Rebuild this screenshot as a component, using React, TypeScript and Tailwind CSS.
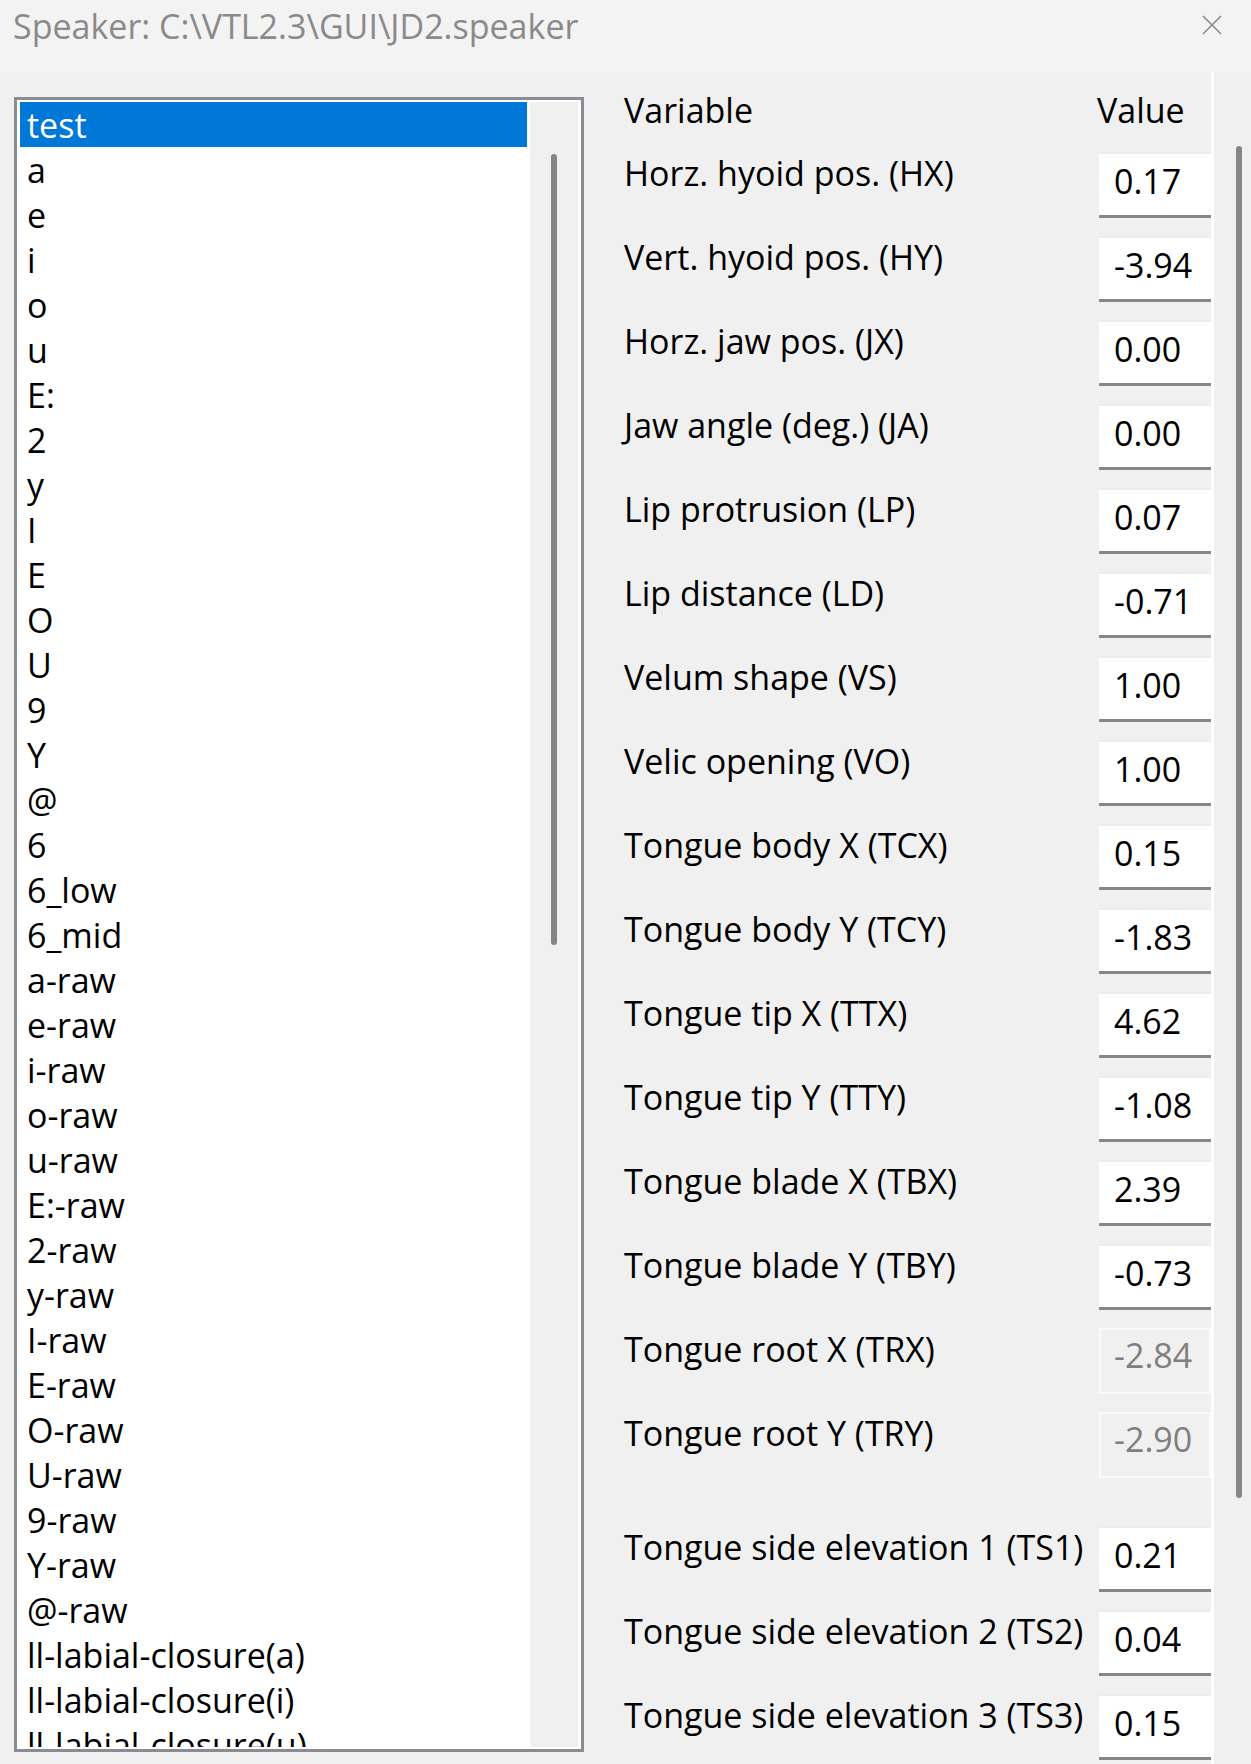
import React from 'react';

const phonemes = [
  'test', 'a', 'e', 'i', 'o', 'u', 'E:', '2', 'y', 'I', 'E', 'O', 'U', '9', 'Y', '@', '6',
  '6_low', '6_mid', 'a-raw', 'e-raw', 'i-raw', 'o-raw', 'u-raw', 'E:-raw', '2-raw', 'y-raw',
  'I-raw', 'E-raw', 'O-raw', 'U-raw', '9-raw', 'Y-raw', '@-raw', 'll-labial-closure(a)',
  'll-labial-closure(i)', 'll-labial-closure(u)',
];

type Param = { label: string; value: string; disabled?: boolean; gapBefore?: boolean };

const params: Param[] = [
  { label: 'Horz. hyoid pos. (HX)', value: '0.17' },
  { label: 'Vert. hyoid pos. (HY)', value: '-3.94' },
  { label: 'Horz. jaw pos. (JX)', value: '0.00' },
  { label: 'Jaw angle (deg.) (JA)', value: '0.00' },
  { label: 'Lip protrusion (LP)', value: '0.07' },
  { label: 'Lip distance (LD)', value: '-0.71' },
  { label: 'Velum shape (VS)', value: '1.00' },
  { label: 'Velic opening (VO)', value: '1.00' },
  { label: 'Tongue body X (TCX)', value: '0.15' },
  { label: 'Tongue body Y (TCY)', value: '-1.83' },
  { label: 'Tongue tip X (TTX)', value: '4.62' },
  { label: 'Tongue tip Y (TTY)', value: '-1.08' },
  { label: 'Tongue blade X (TBX)', value: '2.39' },
  { label: 'Tongue blade Y (TBY)', value: '-0.73' },
  { label: 'Tongue root X (TRX)', value: '-2.84', disabled: true },
  { label: 'Tongue root Y (TRY)', value: '-2.90', disabled: true },
  { label: 'Tongue side elevation 1 (TS1)', value: '0.21', gapBefore: true },
  { label: 'Tongue side elevation 2 (TS2)', value: '0.04' },
  { label: 'Tongue side elevation 3 (TS3)', value: '0.15' },
];

function ParamRow({ p }: { p: Param }) {
  return (
    <div className={`flex h-[84px] shrink-0 items-start ${p.gapBefore ? 'mt-[30px]' : ''}`}>
      <div className="mt-[1px] w-[475px] shrink-0 leading-[45px] text-black whitespace-nowrap">{p.label}</div>
      {p.disabled ? (
        <div className="mt-[2px] h-[66px] w-[112px] shrink-0 border-2 border-[#fbfbfb] bg-[#f0f0f0] pl-[13px] pt-[3px] leading-[45px] text-[#7f7f7f]">
          {p.value}
        </div>
      ) : (
        <div className="mt-[2px] h-[66px] w-[112px] shrink-0 border-t-2 border-b-[3px] border-t-[#ececec] border-b-[#868686] bg-white pl-[15px] pt-[5px] leading-[45px] text-black">
          {p.value}
        </div>
      )}
    </div>
  );
}

export default function App() {
  return (
    <div
      className="w-[1251px] h-[1764px] overflow-hidden bg-[#f0f0f0] text-[34px]"
      style={{ fontFamily: '"Open Sans", "Noto Sans", sans-serif' }}
    >
      {/* title bar */}
      <div className="flex h-[72px] items-start justify-between bg-[#f3f3f3] pl-[13px]">
        <div className="pt-[4px] text-[34px] leading-[45px] text-[#8a8a8a] whitespace-nowrap">
          Speaker: C:\VTL2.3\GUI\JD2.speaker
        </div>
        <svg className="mr-[29px] mt-[15px]" width="20" height="20" viewBox="0 0 20 20">
          <path d="M1 1 L19 19 M19 1 L1 19" stroke="#8b8b8b" strokeWidth="1.6" />
        </svg>
      </div>

      <div className="flex h-[1692px]">
        {/* phoneme list */}
        <div className="w-[584px] shrink-0 pl-[14px] pt-[25px]">
          <div className="flex h-[1655px] w-[570px] border-[3px] border-[#8b8b93] bg-white py-[2px] pl-[3px] pr-[3px]">
            <div className="w-[507px] shrink-0 overflow-hidden">
              {phonemes.map((name, i) => (
                <div
                  key={name}
                  className={`h-[45px] pl-[7px] pt-[1px] leading-[45px] whitespace-nowrap ${
                    i === 0 ? 'bg-[#0078d7] text-white' : 'text-black'
                  }`}
                >
                  {name}
                </div>
              ))}
            </div>
            <div className="ml-[3px] w-[48px] shrink-0 bg-[#f0f0f0] pl-[21px] pt-[52px]">
              <div className="h-[791px] w-[6px] rounded-[3px] bg-[#858585]" />
            </div>
          </div>
        </div>

        {/* variables panel */}
        <div className="flex w-[627px] shrink-0 flex-col overflow-hidden pl-[40px] pt-[16px]">
          <div className="flex h-[62px] shrink-0 items-start leading-[45px] text-black">
            <div className="w-[473px] shrink-0">Variable</div>
            <div>Value</div>
          </div>
          {params.map((p) => (
            <ParamRow key={p.label} p={p} />
          ))}
        </div>

        <div className="w-[3px] shrink-0 bg-white" />

        {/* panel scrollbar */}
        <div className="w-[37px] shrink-0 pl-[22px] pt-[74px]">
          <div className="h-[1352px] w-[6px] rounded-[3px] bg-[#858585]" />
        </div>
      </div>
    </div>
  );
}
